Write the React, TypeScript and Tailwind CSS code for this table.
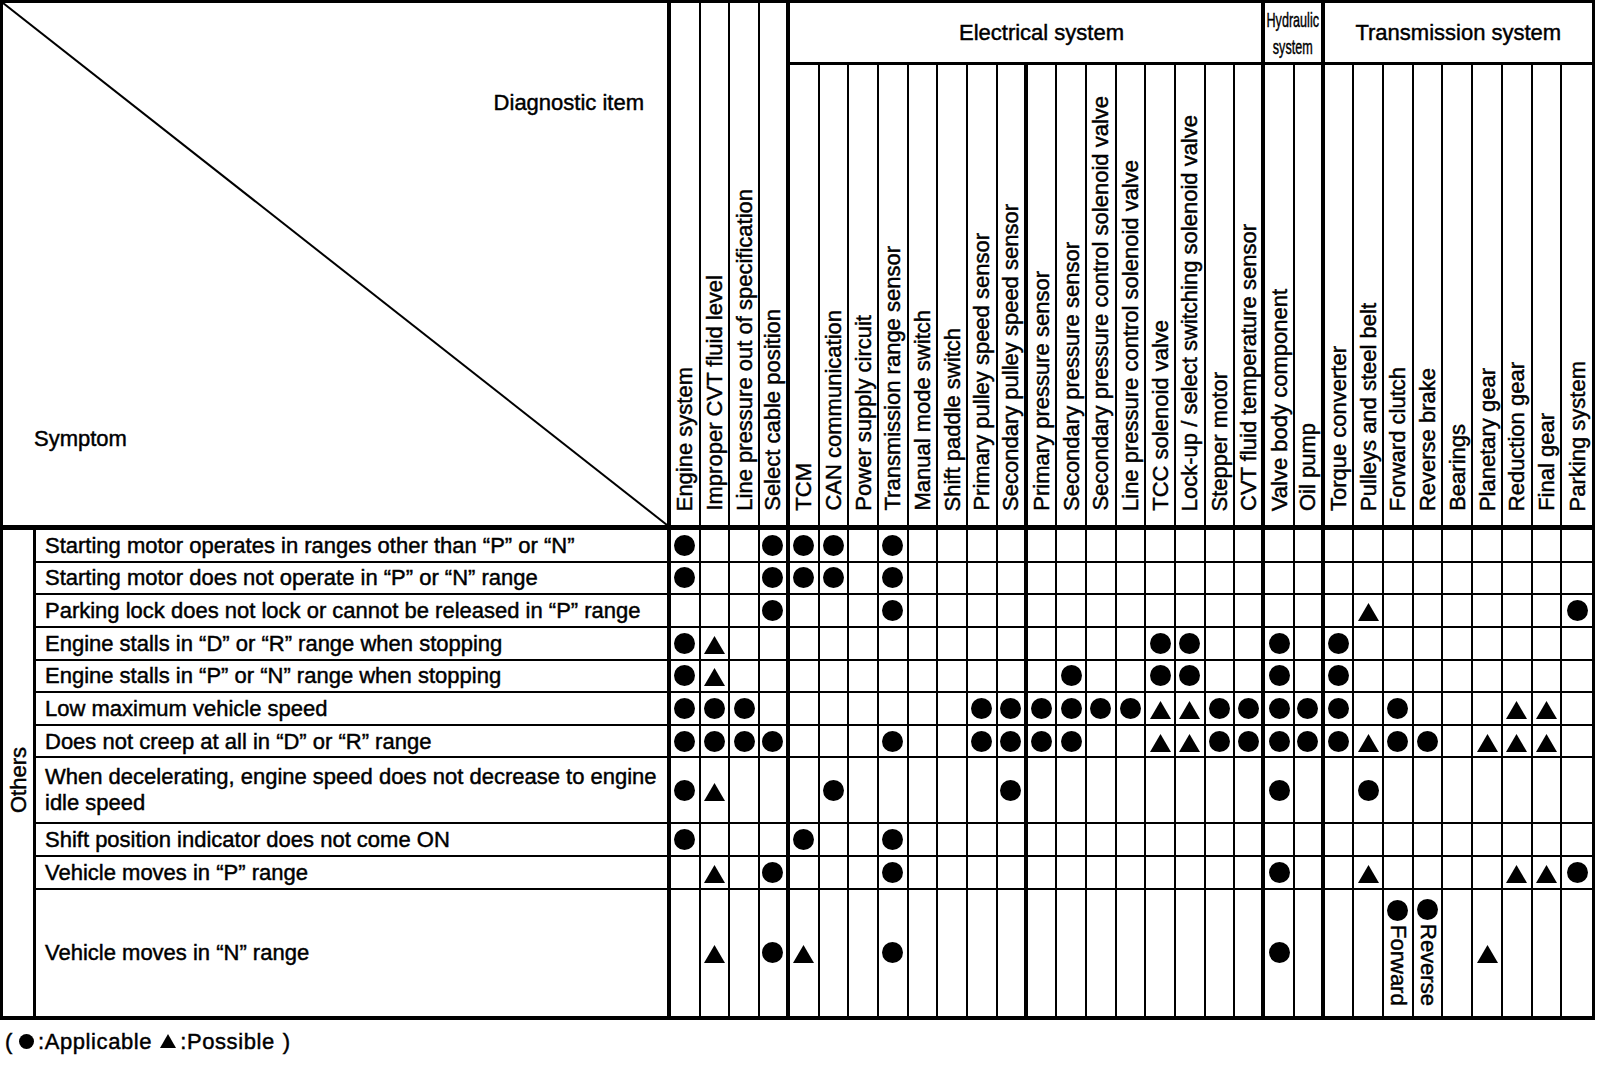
import React from "react";

const HEADERS = [
  "Engine system",
  "Improper CVT fluid level",
  "Line pressure out of specification",
  "Select cable position",
  "TCM",
  "CAN communication",
  "Power supply circuit",
  "Transmission range sensor",
  "Manual mode switch",
  "Shift paddle switch",
  "Primary pulley speed sensor",
  "Secondary pulley speed sensor",
  "Primary pressure sensor",
  "Secondary pressure sensor",
  "Secondary pressure control solenoid valve",
  "Line pressure control solenoid valve",
  "TCC solenoid valve",
  "Lock-up / select switching solenoid valve",
  "Stepper motor",
  "CVT fluid temperature sensor",
  "Valve body component",
  "Oil pump",
  "Torque converter",
  "Pulleys and steel belt",
  "Forward clutch",
  "Reverse brake",
  "Bearings",
  "Planetary gear",
  "Reduction gear",
  "Final gear",
  "Parking system",
];

const THICK = [3, 11, 19, 21];

type Row = { label: React.ReactNode; marks: Record<number, string> };

const ROWS: Row[] = [
  { label: "Starting motor operates in ranges other than “P” or “N”", marks: { 0: "o", 3: "o", 4: "o", 5: "o", 7: "o" } },
  { label: "Starting motor does not operate in “P” or “N” range", marks: { 0: "o", 3: "o", 4: "o", 5: "o", 7: "o" } },
  { label: "Parking lock does not lock or cannot be released in “P” range", marks: { 3: "o", 7: "o", 23: "t", 30: "o" } },
  { label: "Engine stalls in “D” or “R” range when stopping", marks: { 0: "o", 1: "t", 16: "o", 17: "o", 20: "o", 22: "o" } },
  { label: "Engine stalls in “P” or “N” range when stopping", marks: { 0: "o", 1: "t", 13: "o", 16: "o", 17: "o", 20: "o", 22: "o" } },
  {
    label: "Low maximum vehicle speed",
    marks: { 0: "o", 1: "o", 2: "o", 10: "o", 11: "o", 12: "o", 13: "o", 14: "o", 15: "o", 16: "t", 17: "t", 18: "o", 19: "o", 20: "o", 21: "o", 22: "o", 24: "o", 28: "t", 29: "t" },
  },
  {
    label: "Does not creep at all in “D” or “R” range",
    marks: { 0: "o", 1: "o", 2: "o", 3: "o", 7: "o", 10: "o", 11: "o", 12: "o", 13: "o", 16: "t", 17: "t", 18: "o", 19: "o", 20: "o", 21: "o", 22: "o", 23: "t", 24: "o", 25: "o", 27: "t", 28: "t", 29: "t" },
  },
  {
    label: (
      <>
        When decelerating, engine speed does not decrease to engine
        <br />
        idle speed
      </>
    ),
    marks: { 0: "o", 1: "t", 5: "o", 11: "o", 20: "o", 23: "o" },
  },
  { label: "Shift position indicator does not come ON", marks: { 0: "o", 4: "o", 7: "o" } },
  { label: "Vehicle moves in “P” range", marks: { 1: "t", 3: "o", 7: "o", 20: "o", 23: "t", 28: "t", 29: "t", 30: "o" } },
  { label: "Vehicle moves in “N” range", marks: { 1: "t", 3: "o", 4: "t", 7: "o", 20: "o", 24: "F", 25: "R", 27: "t" } },
];

const rightBorder = (i: number) => (i === 30 ? "" : THICK.includes(i) ? "border-r-4" : "border-r-2");

const Dot = () => <div className="w-[21px] h-[21px] rounded-full bg-black" />;

const Tri = () => (
  <svg width="21" height="18" viewBox="0 0 21 18" className="mt-[3px]">
    <polygon points="10.5,0 21,18 0,18" fill="black" />
  </svg>
);

function Mark({ k }: { k?: string }) {
  if (k === "o") return <Dot />;
  if (k === "t") return <Tri />;
  if (k === "F" || k === "R")
    return (
      <div className="flex flex-col items-center gap-[4px]">
        <Dot />
        <span className="[writing-mode:vertical-rl] leading-[22px] whitespace-nowrap">{k === "F" ? "Forward" : "Reverse"}</span>
      </div>
    );
  return null;
}

const VText = ({ children }: { children: React.ReactNode }) => (
  <span className="[writing-mode:vertical-rl] rotate-180 whitespace-nowrap leading-[25px]">{children}</span>
);

export default function App() {
  return (
    <div className="bg-white text-black text-[22px] leading-[25px] [font-family:'Liberation_Sans',Arial,sans-serif] [-webkit-text-stroke:0.45px_black] w-[1600px] h-[1078px]">
      <div className="w-[1595px] border-t-[3px] border-l-[3px] border-r-[3px] border-b-4 border-black grid grid-cols-[33px_635px_repeat(31,minmax(0,1fr))] grid-rows-[62px_465px_repeat(7,32.65px)_66px_repeat(2,32.65px)_126px]">
        {/* corner */}
        <div className="relative col-span-2 row-span-2 border-r-4 border-b-[5px] border-black flex flex-col">
          <svg className="absolute inset-0 w-full h-full" viewBox="0 0 100 100" preserveAspectRatio="none">
            <line x1="0" y1="0" x2="100" y2="100" stroke="black" strokeWidth="2" vectorEffect="non-scaling-stroke" />
          </svg>
          <div className="pt-[87px] pr-[23px] text-right">Diagnostic item</div>
          <div className="mt-[311px] pl-[31px]">Symptom</div>
        </div>

        {/* ungrouped header columns */}
        {HEADERS.slice(0, 4).map((h, i) => (
          <div key={h} className={`row-span-2 border-b-[5px] border-black ${rightBorder(i)} flex items-end justify-center pb-[14px]`}>
            <VText>{h}</VText>
          </div>
        ))}

        {/* group headers */}
        <div className="col-span-16 border-r-4 border-b-[3px] border-black flex items-center justify-center pl-[32px]">Electrical system</div>
        <div className="col-span-2 border-r-4 border-b-[3px] border-black flex items-center justify-center overflow-hidden">
          <div className="scale-x-[0.6] text-[21px] leading-[27px] text-center whitespace-nowrap">
            Hydraulic
            <br />
            system
          </div>
        </div>
        <div className="col-span-9 border-b-[3px] border-black flex items-center justify-center">Transmission system</div>

        {HEADERS.slice(4).map((h, j) => {
          const i = j + 4;
          return (
            <div key={h} className={`border-b-[5px] border-black ${rightBorder(i)} flex items-end justify-center pb-[14px]`}>
              <VText>{h}</VText>
            </div>
          );
        })}

        {/* body */}
        {ROWS.map((r, ri) => {
          const last = ri === ROWS.length - 1;
          const bb = last ? "" : "border-b-2";
          return (
            <React.Fragment key={ri}>
              {ri === 0 && (
                <div className="row-span-11 border-r-[3px] border-black flex items-center justify-center pt-[14px]">
                  <VText>Others</VText>
                </div>
              )}
              <div className={`border-r-4 ${bb} border-black flex items-center pl-[9px] whitespace-nowrap ${ri === 7 ? "leading-[26px]" : ""}`}>
                <div>{r.label}</div>
              </div>
              {HEADERS.map((_, ci) => (
                <div key={ci} className={`${rightBorder(ci)} ${bb} border-black flex items-center justify-center`}>
                  <Mark k={r.marks[ci]} />
                </div>
              ))}
            </React.Fragment>
          );
        })}
      </div>

      <div className="mt-[9px] pl-[5px] flex items-center gap-[4px] tracking-[0.6px]">
        <span>(</span>
        <span className="w-[15px] h-[15px] rounded-full bg-black ml-[2px]" />
        <span>:Applicable</span>
        <svg width="16" height="14" viewBox="0 0 16 14" className="ml-[4px]">
          <polygon points="8,0 16,14 0,14" fill="black" />
        </svg>
        <span>:Possible</span>
        <span className="ml-[4px]">)</span>
      </div>
    </div>
  );
}
